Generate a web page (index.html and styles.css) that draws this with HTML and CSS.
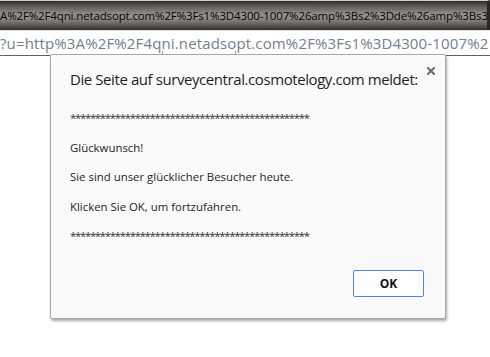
FILE: index.html
```html
<!DOCTYPE html>
<html lang="de">
<head>
    <meta charset="UTF-8">
    <meta name="viewport" content="width=device-width, initial-scale=1.0">
    <title>Meldung</title>
    <link rel="stylesheet" href="styles.css">
</head>
<body>
    <div class="window">
        <div class="titlebar">
            <span class="title-text">A%2F%2F4qni.netadsopt.com%2F%3Fs1%3D4300-1007%26amp%3Bs2%3Dde%26amp%3Bs3</span>
        </div>
        <div class="addressbar">
            <span class="url">?u=http%3A%2F%2F4qni.netadsopt.com%2F%3Fs1%3D4300-1007%2</span>
            <span class="tick tick-blue"></span>
            <span class="tick tick-brown"></span>
        </div>
        <div class="page"></div>

        <div class="dialog">
            <div class="dialog-head">
                <h1>Die Seite auf surveycentral.cosmotelogy.com meldet:</h1>
                <button class="close" aria-label="Schließen">
                    <svg width="8" height="8" viewBox="0 0 8 8">
                        <path d="M1 1 L7 7 M7 1 L1 7" stroke="#6b6b6b" stroke-width="2" stroke-linecap="square"/>
                    </svg>
                </button>
            </div>
            <div class="message">
                <p class="stars">************************************************</p>
                <p>Glückwunsch!</p>
                <p>Sie sind unser glücklicher Besucher heute.</p>
                <p>Klicken Sie OK, um fortzufahren.</p>
                <p class="stars">************************************************</p>
            </div>
            <div class="dialog-foot">
                <button class="ok">OK</button>
            </div>
        </div>
    </div>
</body>
</html>
```

FILE: styles.css
```css
:root {
    --text: #1e1e1e;
    --url: #71808f;
    --accent: #4a86e8;
    --dialog-bg: #fafafa;
}
body {
    margin: 0;
    background: #fff;
    font-family: 'Open Sans', sans-serif;
    color: var(--text);
}
.window {
    position: relative;
    width: 490px;
    height: 357px;
    overflow: hidden;
}
.titlebar {
    height: 29px;
    border-top: 1px solid #cfcfcf;
    border-right: 3px solid #2a2826;
    background: linear-gradient(#2d2b29 0, #5e5a56 18%, #8a8681 45%, #86827d 60%, #5a5652 85%, #2f2d2b 100%);
    overflow: hidden;
    white-space: nowrap;
}
.title-text {
    display: block;
    font-size: 11.5px;
    line-height: 29px;
    letter-spacing: -0.14px;
    color: #000;
    text-shadow: 0 0 6px rgba(230, 225, 215, 0.6);
}
.addressbar {
    position: relative;
    height: 24px;
    border-top: 1px solid #e6e6e6;
    border-bottom: 1px solid #606060;
    background: #fff;
    overflow: hidden;
    white-space: nowrap;
}
.url {
    display: block;
    font-size: 15px;
    line-height: 24px;
    letter-spacing: 0.14px;
    color: var(--url);
}
.tick {
    position: absolute;
    bottom: 0;
    width: 1px;
    height: 4px;
}
.tick-blue {
    left: 162px;
    background: #8fa9d6;
}
.tick-brown {
    left: 235px;
    background: #c9a27c;
}
.dialog {
    position: absolute;
    left: 50px;
    top: 54px;
    width: 394px;
    height: 263px;
    background: var(--dialog-bg);
    border: 1px solid #a9a9a9;
    border-radius: 2px;
    box-shadow: 1px 2px 3px rgba(0, 0, 0, 0.35);
    display: flex;
    flex-direction: column;
}
.dialog-head {
    display: flex;
    align-items: flex-start;
    padding: 0 10px 0 19px;
}
.dialog-head h1 {
    flex: 1;
    margin: 14px 0 0;
    font-size: 15px;
    font-weight: normal;
    line-height: 20px;
    letter-spacing: -0.42px;
}
.close {
    margin-top: 12px;
    padding: 0;
    width: 8px;
    height: 8px;
    border: none;
    background: none;
    display: flex;
}
.message {
    margin-top: 22px;
    padding-left: 19px;
    font-size: 11.4px;
    line-height: 14.8px;
}
.message p {
    margin: 0 0 14.8px;
}
.message p:last-child {
    margin-bottom: 0;
}
.stars {
    letter-spacing: -1.3px;
    color: #333;
}
.dialog-foot {
    margin-top: auto;
    display: flex;
    justify-content: flex-end;
    padding: 0 21px 21px 0;
}
.ok {
    width: 71px;
    height: 27px;
    border: 1px solid var(--accent);
    border-radius: 2px;
    background: #fff;
    font-family: 'Open Sans', sans-serif;
    font-size: 12px;
    font-weight: bold;
    color: #111;
}
```
